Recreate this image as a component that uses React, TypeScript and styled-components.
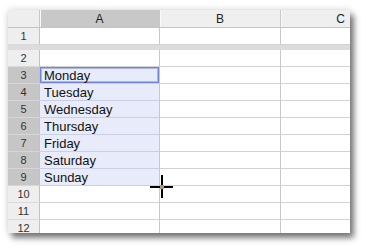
import React from "react";
import styled, { createGlobalStyle } from "styled-components";

const Global = createGlobalStyle`
  html, body { margin: 0; padding: 0; background: #ffffff; }
  body { font-family: "Liberation Sans", Arial, sans-serif; }
`;

const Page = styled.div`
  width: 368px;
  height: 252px;
  padding: 10px 0 0 8px;
  box-sizing: border-box;
`;

const Sheet = styled.div`
  position: relative;
  width: 342px;
  height: 223px;
  overflow: hidden;
  background: #ffffff;
  display: flex;
  flex-direction: column;
  box-shadow: 0 0 7px rgba(0, 0, 0, 0.16), 4px 5px 6px rgba(0, 0, 0, 0.5);
`;

const COLS = "32px 120px 121px 120px";

const HeaderRow = styled.div`
  display: grid;
  grid-template-columns: ${COLS};
  height: 18px;
  flex: none;
  background: #eeeeee;
  border-bottom: 1px solid #c4c4c4;
  box-sizing: border-box;
`;

const Corner = styled.div`
  position: relative;
  background: #eeeeee;
  border-right: 1px solid #c8c8c8;
  &::after {
    content: "";
    position: absolute;
    right: 0;
    top: 0;
    bottom: 0;
    width: 3px;
    background-image: radial-gradient(circle, #7c9ce6 45%, transparent 50%);
    background-size: 2px 2px;
  }
`;

const ColHead = styled.div<{ $sel?: boolean }>`
  display: flex;
  align-items: center;
  justify-content: center;
  font-size: 12px;
  color: #222;
  background: ${(p) => (p.$sel ? "#c8c8c8" : "#efefef")};
  border-right: 1px solid #c8c8c8;
  box-shadow: inset 1px 0 0 #fafafa;
`;

const Row = styled.div`
  display: grid;
  grid-template-columns: ${COLS};
  height: 17px;
  flex: none;
`;

const RowHead = styled.div<{ $sel?: boolean }>`
  display: flex;
  align-items: center;
  justify-content: center;
  font-size: 11px;
  color: #333;
  background: ${(p) => (p.$sel ? "#c6c6c6" : "#eeeeee")};
  border-right: 1px solid #c2c2c2;
  border-bottom: 1px solid ${(p) => (p.$sel ? "#d6d6d6" : "#dadada")};
  box-sizing: border-box;
`;

const Cell = styled.div<{ $sel?: boolean; $active?: boolean }>`
  display: flex;
  align-items: center;
  padding-left: 4px;
  font-size: 13px;
  color: #111;
  white-space: nowrap;
  background: ${(p) => (p.$sel ? "#e8ebf9" : "#ffffff")};
  border-right: 1px solid #c8c8c8;
  border-bottom: 1px solid ${(p) => (p.$sel ? "#c9cfe6" : "#d2d2d2")};
  box-sizing: border-box;
  box-shadow: ${(p) => (p.$active ? "inset 0 0 0 1px #6f86d4, inset 0 0 0 2px #a9b7e8" : "none")};
`;

const FreezeBar = styled.div`
  display: grid;
  grid-template-columns: ${COLS};
  height: 5px;
  flex: none;
  background: #dcdcdc;
`;

const FreezeHandle = styled.div`
  background-color: #dcdcdc;
  background-image: radial-gradient(circle, #7c9ce6 45%, transparent 50%);
  background-size: 2px 2px;
  background-repeat: repeat;
  margin: 1px 0;
`;

const CrossCursor = styled.div`
  position: absolute;
  left: 142px;
  top: 165px;
  width: 23px;
  height: 23px;
  &::before {
    content: "";
    position: absolute;
    left: 0;
    top: 11px;
    width: 23px;
    height: 2px;
    background: #000;
  }
  &::after {
    content: "";
    position: absolute;
    left: 11px;
    top: 0;
    width: 2px;
    height: 23px;
    background: #000;
  }
`;

const CrossDot = styled.div`
  position: absolute;
  left: 10px;
  top: 10px;
  width: 4px;
  height: 4px;
  background: #a89a6a;
  z-index: 1;
`;

const days: Record<number, string> = {
  3: "Monday",
  4: "Tuesday",
  5: "Wednesday",
  6: "Thursday",
  7: "Friday",
  8: "Saturday",
  9: "Sunday",
};

function SheetRow({ n }: { n: number }) {
  const sel = n >= 3 && n <= 9;
  return (
    <Row>
      <RowHead $sel={sel}>{n}</RowHead>
      <Cell $sel={sel} $active={n === 3}>
        {days[n] ?? ""}
      </Cell>
      <Cell />
      <Cell />
    </Row>
  );
}

export default function App() {
  return (
    <>
      <Global />
      <Page>
        <Sheet>
          <HeaderRow>
            <Corner />
            <ColHead $sel>A</ColHead>
            <ColHead>B</ColHead>
            <ColHead>C</ColHead>
          </HeaderRow>
          <SheetRow n={1} />
          <FreezeBar>
            <FreezeHandle />
          </FreezeBar>
          {[2, 3, 4, 5, 6, 7, 8, 9, 10, 11, 12].map((n) => (
            <SheetRow key={n} n={n} />
          ))}
          <CrossCursor>
            <CrossDot />
          </CrossCursor>
        </Sheet>
      </Page>
    </>
  );
}
